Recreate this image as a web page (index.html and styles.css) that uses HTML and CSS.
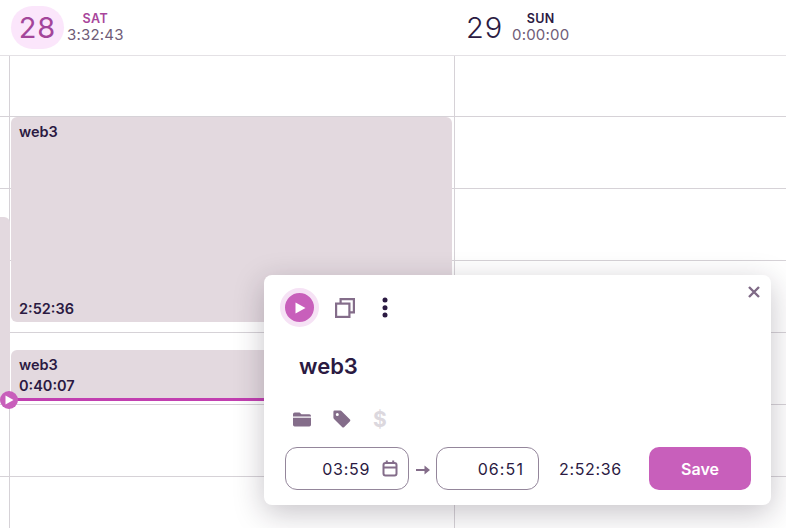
FILE: index.html
```html
<!DOCTYPE html>
<html lang="en">
<head>
    <meta charset="UTF-8">
    <title>Calendar</title>
    <link rel="stylesheet" href="styles.css">
</head>
<body>
    <div class="header">
        <div class="day-head today">
            <div class="day-num">28</div>
            <div class="day-info">
                <div class="day-name">SAT</div>
                <div class="day-total">3:32:43</div>
            </div>
        </div>
        <div class="day-head next">
            <div class="day-num">29</div>
            <div class="day-info">
                <div class="day-name">SUN</div>
                <div class="day-total">0:00:00</div>
            </div>
        </div>
    </div>

    <div class="grid">
        <div class="col col-prev">
            <div class="slot first"></div><div class="slot"></div><div class="slot"></div><div class="slot"></div><div class="slot"></div><div class="slot"></div><div class="slot"></div>
            <div class="event event-prev"></div>
        </div>
        <div class="col col-sat">
            <div class="slot first"></div><div class="slot"></div><div class="slot"></div><div class="slot"></div><div class="slot"></div><div class="slot"></div><div class="slot"></div>
            <div class="event event-long">
                <span>web3</span>
                <span>2:52:36</span>
            </div>
            <div class="event event-short">
                <span>web3</span>
                <span>0:40:07</span>
            </div>
        </div>
        <div class="col col-sun">
            <div class="slot first"></div><div class="slot"></div><div class="slot"></div><div class="slot"></div><div class="slot"></div><div class="slot"></div><div class="slot"></div>
        </div>

        <div class="now-line"></div>
        <div class="now-dot">
            <svg width="10" height="10" viewBox="0 0 10 10"><path d="M1.5 0.5 L9.5 5 L1.5 9.5 Z" fill="#fff"/></svg>
        </div>
    </div>

    <div class="popup">
        <button class="close" aria-label="Close">
            <svg width="14" height="14" viewBox="0 0 14 14"><path d="M2 2 L12 12 M12 2 L2 12" stroke="#7f6a86" stroke-width="2.4" fill="none"/></svg>
        </button>

        <div class="popup-actions">
            <div class="play">
                <svg width="14" height="14" viewBox="0 0 14 14"><path d="M2.5 1.5 L12.5 7 L2.5 12.5 Z" fill="#fff"/></svg>
            </div>
            <svg class="copy" width="20" height="20" viewBox="0 0 20 20" fill="none" stroke="#846d8a" stroke-width="2.2">
                <rect x="1.1" y="5.6" width="13.3" height="13.3"/>
                <path d="M5.6 5.6 V1.1 H18.9 V14.4 H14.4"/>
            </svg>
            <svg class="more" width="6" height="22" viewBox="0 0 6 22" fill="#2b1a42">
                <circle cx="3" cy="3" r="2.5"/><circle cx="3" cy="10.7" r="2.5"/><circle cx="3" cy="18" r="2.5"/>
            </svg>
        </div>

        <div class="popup-title">web3</div>

        <div class="popup-icons">
            <svg width="18" height="15" viewBox="0 0 18 15" fill="#846d8a">
                <path d="M1.7 0.5 H6.6 L8.4 2.3 H16.3 Q18 2.3 18 4 V4.6 H0 V2.2 Q0 0.5 1.7 0.5 Z"/>
                <path d="M0 5.8 H18 V12.8 Q18 14.5 16.3 14.5 H1.7 Q0 14.5 0 12.8 Z"/>
            </svg>
            <svg width="18" height="18" viewBox="0 0 18 18" fill="#846d8a">
                <path fill-rule="evenodd" d="M1.6 0.6 H7.4 Q8.1 0.6 8.7 1.2 L17 9.5 Q17.8 10.4 17 11.2 L11 17.2 Q10.2 18 9.3 17.2 L1 8.9 Q0.4 8.3 0.4 7.6 V1.8 Q0.4 0.6 1.6 0.6 Z M4.3 2.9 A1.5 1.5 0 1 0 4.3 5.9 A1.5 1.5 0 1 0 4.3 2.9 Z"/>
            </svg>
            <span class="billable">$</span>
        </div>

        <div class="popup-times">
            <div class="time-box start">
                <span>03:59</span>
                <svg width="16" height="17" viewBox="0 0 16 17" fill="none" stroke="#846d8a" stroke-width="2">
                    <rect x="1.5" y="3" width="13" height="12.5" rx="2"/>
                    <path d="M1.5 7.5 H14.5 M4.8 0.5 V3.5 M11.2 0.5 V3.5"/>
                </svg>
            </div>
            <svg class="arrow" width="14" height="10" viewBox="0 0 14 10" fill="#846d8a">
                <path d="M0 4 H8.5 V0.5 L14 5 L8.5 9.5 V6 H0 Z"/>
            </svg>
            <div class="time-box end"><span>06:51</span></div>
            <div class="duration">2:52:36</div>
            <button class="save">Save</button>
        </div>
    </div>
</body>
</html>
```

FILE: styles.css
```css
html, body {
    margin: 0;
    height: 100%;
    overflow: hidden;
}
body {
    position: relative;
    background: #fff;
    font-family: 'Inter', sans-serif;
    color: #2b1a42;
}
.header {
    display: flex;
    height: 55px;
    border-bottom: 1px solid #e4e1e5;
}
.day-head {
    display: flex;
    align-items: center;
}
.today {
    width: 455px;
    padding-left: 11px;
    box-sizing: border-box;
}
.next {
    padding-left: 11px;
}
.day-num {
    width: 53px;
    height: 43px;
    line-height: 43px;
    border-radius: 22px;
    text-align: center;
    font-size: 29px;
    font-weight: 300;
    letter-spacing: 1px;
}
.today .day-num {
    background: #fbe6fb;
    color: #a3459a;
    font-weight: 400;
}
.next .day-num {
    width: 36px;
    margin-right: 7px;
}
.day-info {
    margin-left: 3px;
    text-align: center;
}
.day-name {
    font-size: 12.5px;
    font-weight: 600;
    line-height: 14px;
    letter-spacing: 0.4px;
}
.today .day-name {
    color: #a8459b;
}
.day-total {
    font-size: 15px;
    line-height: 18px;
    letter-spacing: 0.2px;
    color: #6f5c78;
}
.grid {
    position: relative;
    display: flex;
    height: 472px;
    overflow: hidden;
}
.col {
    position: relative;
    box-sizing: border-box;
    border-right: 1px solid #d6d2d7;
}
.col-prev {
    width: 10px;
}
.col-sat {
    width: 445px;
}
.col-sun {
    flex: 1;
    border-right: none;
}
.slot {
    height: 72px;
    box-sizing: border-box;
    border-bottom: 1px solid #d6d2d7;
}
.slot.first {
    height: 61px;
}
.event {
    position: absolute;
    box-sizing: border-box;
    display: flex;
    flex-direction: column;
    justify-content: space-between;
    background: #e3d9df;
    border-radius: 6px;
    padding: 6px 8px 5px;
    font-size: 14.5px;
    font-weight: 600;
    line-height: 17px;
}
.event-prev {
    left: -6px;
    right: 1px;
    top: 161px;
    height: 185px;
}
.event-long {
    left: 1px;
    right: 2px;
    top: 61px;
    height: 205px;
}
.event-short {
    left: 1px;
    right: 2px;
    top: 294px;
    height: 48px;
    padding: 6px 8px 2px;
    justify-content: flex-start;
    gap: 4px;
}
.now-line {
    position: absolute;
    left: 8px;
    width: 446px;
    top: 342px;
    height: 3px;
    background: #c13fb0;
}
.now-dot {
    position: absolute;
    left: 0;
    top: 335px;
    width: 18px;
    height: 18px;
    border-radius: 50%;
    background: #c85fbb;
    display: flex;
    align-items: center;
    justify-content: center;
}
.popup {
    position: absolute;
    left: 264px;
    top: 275px;
    width: 507px;
    height: 230px;
    box-sizing: border-box;
    padding: 13px 20px 15px 21px;
    background: #fff;
    border-radius: 8px;
    box-shadow: 0 8px 30px rgba(30, 20, 40, 0.25);
    display: flex;
    flex-direction: column;
}
.close {
    position: absolute;
    top: 10px;
    right: 10px;
    width: 14px;
    height: 14px;
    padding: 0;
    border: none;
    background: none;
    display: flex;
}
.popup-actions {
    display: flex;
    align-items: center;
    height: 39px;
}
.play {
    width: 29px;
    height: 29px;
    border-radius: 50%;
    background: #c85fbb;
    border: 5px solid #f6e2f5;
    display: flex;
    align-items: center;
    justify-content: center;
    margin-left: -5px;
}
.copy {
    margin-left: 16px;
}
.more {
    margin-left: 27px;
}
.popup-title {
    margin: 26px 0 0 14px;
    font-size: 22px;
    font-weight: 600;
    line-height: 26px;
}
.popup-icons {
    display: flex;
    align-items: center;
    gap: 23px;
    margin: 30px 0 0 8px;
    height: 20px;
}
.popup-icons svg + svg {
    margin-left: -1px;
}
.billable {
    margin-left: -1px;
    font-size: 21px;
    font-weight: 700;
    color: #dcd8de;
}
.popup-times {
    display: flex;
    align-items: center;
    margin-top: 18px;
}
.time-box {
    box-sizing: border-box;
    height: 43px;
    border: 1px solid #94869b;
    border-radius: 12px;
    display: flex;
    align-items: center;
    justify-content: flex-end;
    font-size: 16px;
    letter-spacing: 0.7px;
}
.time-box.start {
    width: 124px;
    padding-right: 10px;
    gap: 12px;
}
.time-box.end {
    width: 103px;
    padding-right: 14px;
    letter-spacing: 1.1px;
}
.arrow {
    margin: 2px 6px 0 7px;
}
.duration {
    margin-left: 20px;
    width: 90px;
    font-size: 16px;
    letter-spacing: 0.65px;
}
.save {
    width: 102px;
    height: 43px;
    border: none;
    border-radius: 10px;
    background: #c85fbb;
    color: #fff;
    font-family: inherit;
    font-size: 16px;
    font-weight: 600;
}
```
